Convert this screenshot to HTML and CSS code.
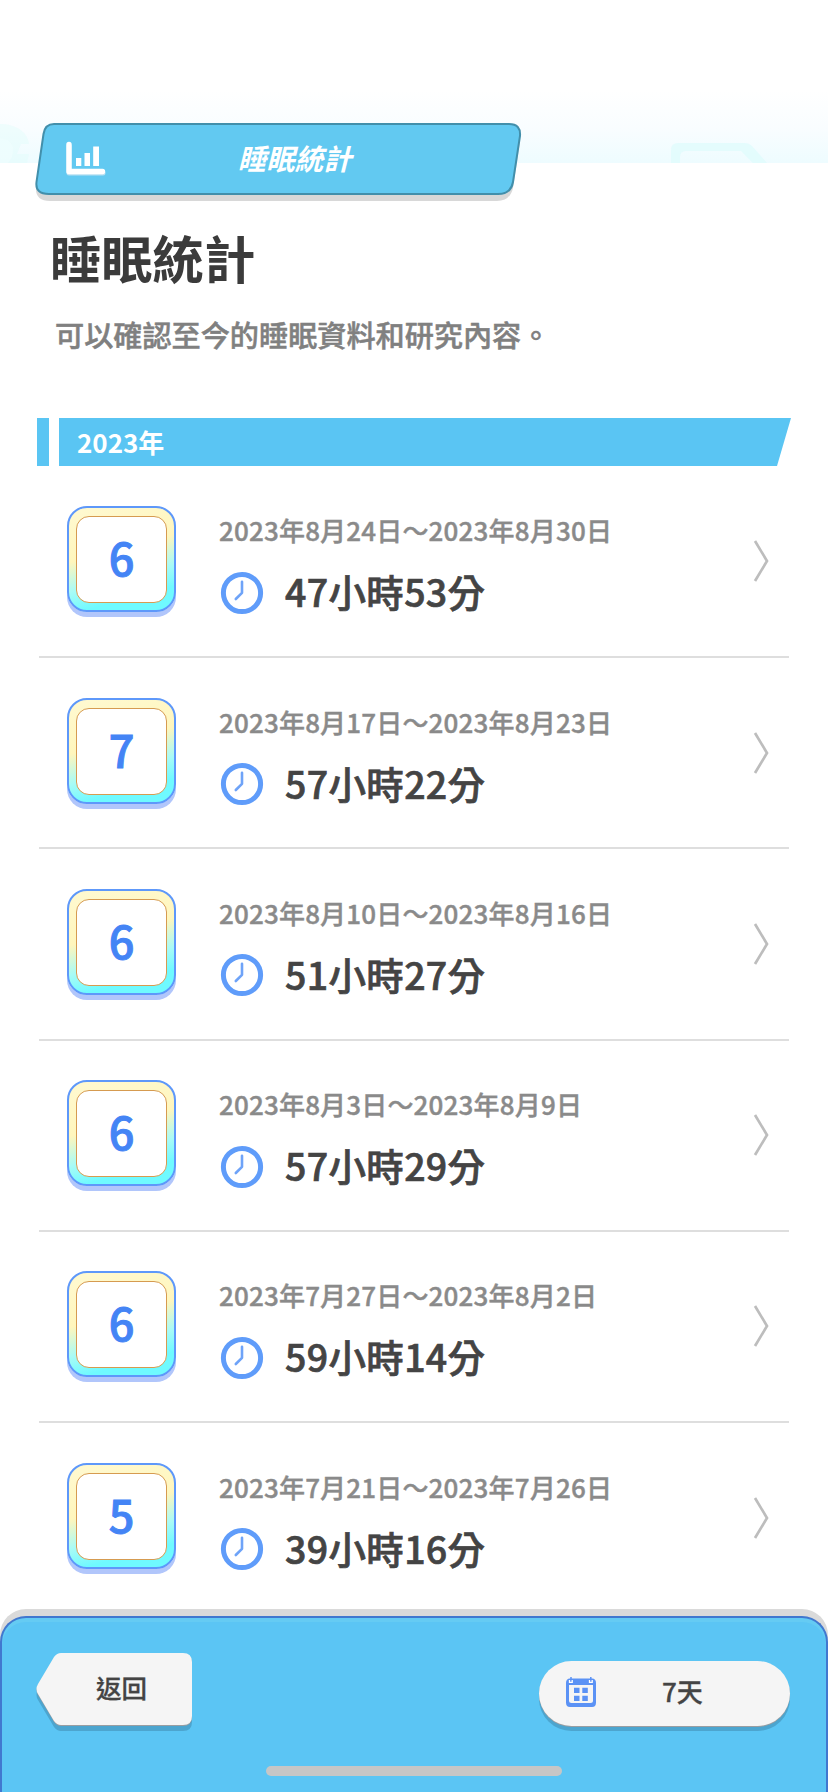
FILE: index.html
```html
<!DOCTYPE html>
<html lang="zh-Hant">
<head>
<meta charset="utf-8">
<title>睡眠統計</title>
<link rel="stylesheet" href="styles.css">
</head>
<body>
<svg class="symbols" width="0" height="0" aria-hidden="true">
  <symbol id="clock" viewBox="0 0 44 44">
    <circle cx="22" cy="22" r="18.6" fill="none" stroke="#5f9cfa" stroke-width="5"/>
    <path d="M22 10.7V21.8L15.8 28" fill="none" stroke="#6ea3f8" stroke-width="2.6" stroke-linecap="round" stroke-linejoin="round"/>
  </symbol>
  <symbol id="chevron" viewBox="0 0 16 44">
    <path d="M2 2L14 22L2 42" fill="none" stroke="#bdbdbd" stroke-width="2.7"/>
  </symbol>
</svg>
<div class="screen">
  <header class="top">
    <svg class="pattern" viewBox="0 0 828 73" aria-hidden="true">
      <path d="M0 34C16 34 28 42 29 54H21L17 64H29L27 73H0Z" fill="#dffcfb" opacity=".4"/>
      <path d="M0 48Q14 50 13 61Q13 68 8 73H0Z" fill="#effdfe" opacity=".7"/>
      <path d="M671 73V60Q671 53 678 53H745Q749 53 752 56L767 73H753L741 61H686Q680 61 680 67V73Z" fill="#e0fbfc" opacity=".8"/>
    </svg>
    <div class="tab">
      <svg class="tab-shape" viewBox="0 0 488 80" aria-hidden="true">
        <path d="M19 8H474Q486 8 485 20L478 66Q475 79 462 79H15Q0 79 1 65L9 18Q11 8 19 8Z" fill="#d8d8d8"/>
        <path d="M19 2H474Q486 2 485 14L478 60Q476 72 463 72H14Q0 72 1.500 60L8.500 12Q10 2 19 2Z" fill="#62c9f1" stroke="#428fab" stroke-width="2"/>
      </svg>
      <svg class="tab-icon" viewBox="0 0 40 36" aria-hidden="true">
        <path d="M3 4V31H37" transform="translate(0 1)" fill="none" stroke="#b9e0f2" stroke-width="5" stroke-linecap="round" stroke-linejoin="round"/>
        <path d="M3 3.500V30.500H36.500" fill="none" stroke="#fff" stroke-width="5.400" stroke-linecap="round" stroke-linejoin="round"/>
        <path d="M10 17H15.300V25H10ZM18.500 12H24V25H18.500ZM27.200 5.500H33V25H27.200Z" fill="#fff"/>
      </svg>
      <span class="tab-label">睡眠統計</span>
    </div>
  </header>
  <h1 class="title">睡眠統計</h1>
  <p class="lead">可以確認至今的睡眠資料和研究內容。</p>
  <div class="year"><i class="year-mark"></i><h2 class="year-bar">2023年</h2></div>
  <main class="list">
    <article class="row"><div class="badge"><b>6</b></div><div class="info"><p class="dates">2023年8月24日～2023年8月30日</p><p class="time"><svg class="clock"><use href="#clock"/></svg>47小時53分</p></div><svg class="chevron"><use href="#chevron"/></svg></article>
    <article class="row"><div class="badge"><b>7</b></div><div class="info"><p class="dates">2023年8月17日～2023年8月23日</p><p class="time"><svg class="clock"><use href="#clock"/></svg>57小時22分</p></div><svg class="chevron"><use href="#chevron"/></svg></article>
    <article class="row"><div class="badge"><b>6</b></div><div class="info"><p class="dates">2023年8月10日～2023年8月16日</p><p class="time"><svg class="clock"><use href="#clock"/></svg>51小時27分</p></div><svg class="chevron"><use href="#chevron"/></svg></article>
    <article class="row"><div class="badge"><b>6</b></div><div class="info"><p class="dates">2023年8月3日～2023年8月9日</p><p class="time"><svg class="clock"><use href="#clock"/></svg>57小時29分</p></div><svg class="chevron"><use href="#chevron"/></svg></article>
    <article class="row"><div class="badge"><b>6</b></div><div class="info"><p class="dates">2023年7月27日～2023年8月2日</p><p class="time"><svg class="clock"><use href="#clock"/></svg>59小時14分</p></div><svg class="chevron"><use href="#chevron"/></svg></article>
    <article class="row"><div class="badge"><b>5</b></div><div class="info"><p class="dates">2023年7月21日～2023年7月26日</p><p class="time"><svg class="clock"><use href="#clock"/></svg>39小時16分</p></div><svg class="chevron"><use href="#chevron"/></svg></article>
  </main>
  <footer class="dock">
    <div class="dock-panel">
      <div class="actions">
        <div class="back">
          <svg class="back-shape" viewBox="0 0 156 78" aria-hidden="true">
            <path d="M25 5H147Q156 5 156 14V69Q156 78 147 78H25Q21 78 18 74L2 47Q-1 42 2 37L18 9Q21 5 25 5Z" fill="#4ca5cf"/>
            <path d="M25 1H147Q156 1 156 10V64Q156 73 147 73H25Q21 73 18 69L2 42Q-1 37 2 32L18 5Q21 1 25 1Z" fill="#999ea2"/>
            <path d="M25 0H147Q156 0 156 9V63Q156 72 147 72H25Q21 72 18 68L2 41Q-1 36 2 31L18 4Q21 0 25 0Z" fill="#f5f5f5"/>
          </svg>
          <span class="back-label">返回</span>
        </div>
        <div class="range">
          <svg class="calendar" viewBox="0 0 30 30" aria-hidden="true">
            <path d="M4 1.500H26Q30 1.500 30 6V25.500Q30 30 26 30H4Q0 30 0 25.500V6Q0 1.500 4 1.500Z" fill="#5b92f5"/>
            <path d="M3 8H27V23.500Q27 26 24.500 26H5.500Q3 26 3 23.500Z" fill="#f5f5f5"/>
            <path d="M8 10.700H13.500V16H8ZM16.300 10.700H21.800V16H16.300ZM8 18.700H13.500V24H8ZM16.300 18.700H21.800V24H16.300Z" fill="#5b92f5"/>
            <path d="M3.500 3V5.300H6.200V3M23.500 3V5.300H26.200V3" fill="none" stroke="#fff" stroke-width="1.300"/>
            <path d="M5 0V3M24.800 0V3" stroke="#5b92f5" stroke-width="1.500"/>
          </svg>
          <span class="range-label">7天</span>
        </div>
      </div>
      <div class="home"></div>
    </div>
  </footer>
</div>
</body>
</html>
```
FILE: styles.css
```css
* { box-sizing: border-box; margin: 0; padding: 0; }
body {
  background: #fff;
  font-family: "Noto Sans CJK TC", sans-serif;
  color: #444;
}
.symbols { position: absolute; }
.screen {
  display: flex;
  flex-direction: column;
  width: 828px;
  height: 1792px;
  overflow: hidden;
}
.top {
  position: relative;
  flex: none;
  height: 208px;
  padding: 122px 0 0 35px;
  background: linear-gradient(#fff 90px, #f9fdff 128px, #eefcff 163px, #fff 163px);
}
.pattern { position: absolute; left: 0; top: 90px; width: 828px; height: 73px; }
.tab {
  position: relative;
  display: flex;
  width: 488px;
  height: 80px;
  padding: 19px 0 0 31px;
}
.tab-shape { position: absolute; inset: 0; width: 488px; height: 80px; }
.tab-icon { position: relative; width: 40px; height: 36px; }
.tab-label {
  position: relative;
  margin: -5px 0 0 135px;
  height: 42px;
  line-height: 42px;
  font-size: 29px;
  font-weight: 700;
  color: #fff;
  transform: scaleX(.98) skewX(-14deg);
  transform-origin: 0 50%;
}
.title {
  flex: none;
  height: 96px;
  padding-left: 50px;
  line-height: 97px;
  font-size: 51.300px;
  font-weight: 700;
  color: #3b3b3b;
}
.lead {
  flex: none;
  height: 114px;
  padding-left: 55px;
  line-height: 60px;
  font-size: 29.150px;
  font-weight: 500;
  -webkit-text-stroke: .5px #808080;
  color: #808080;
}
.year { flex: none; display: flex; gap: 10px; height: 48px; padding-left: 37px; }
.year-mark { width: 12px; background: #5ac5f3; }
.year-bar {
  width: 732px;
  padding-left: 18px;
  background: #5ac5f3;
  clip-path: polygon(0 0, 100% 0, calc(100% - 14px) 100%, 0 100%);
  line-height: 48px;
  font-size: 26px;
  font-weight: 700;
  color: #fff;
}
.list { flex: 1; min-height: 0; overflow: hidden; padding: 0 39px; }
.row {
  display: flex;
  height: 191.25px;
  padding: 39.500px 20px 0 28px;
  border-bottom: 2px solid #dedede;
}
.row:first-child { height: 192px; padding-top: 40px; }
.badge {
  display: flex;
  width: 109px;
  height: 106px;
  padding: 8px 7px 7px;
  border: 2px solid #5e98fa;
  border-radius: 20px;
  background: linear-gradient(165deg, #fff9cf 5%, #fff6bd 42%, #a8fbf6 65%, #6ffaff 82%);
  box-shadow: 0 5px 0 #b1c6fb;
}
.badge b {
  flex: 1;
  border: 1.500px solid #d69b50;
  border-radius: 13px;
  background: #fff;
  line-height: 79px;
  text-align: center;
  font-size: 45px;
  font-weight: 500;
  -webkit-text-stroke: 1px #4484f5;
  color: #4484f5;
}
.info { flex: 1; padding-left: 43px; }
.dates {
  height: 66px;
  line-height: 48px;
  white-space: nowrap;
  font-size: 26px;
  font-weight: 500;
  letter-spacing: .17px;
  -webkit-text-stroke: .4px #8a8a8a;
  color: #8a8a8a;
}
.time {
  display: flex;
  align-items: center;
  height: 38px;
  line-height: 36px;
  white-space: nowrap;
  font-size: 37.500px;
  font-weight: 500;
  letter-spacing: .35px;
  -webkit-text-stroke: .7px #444;
  color: #444;
}
.clock { width: 44px; height: 44px; margin: 3px 21px 0 1px; }
.chevron { width: 16px; height: 44px; margin-top: 33px; }
.dock {
  flex: none;
  height: 183px;
  padding-top: 7px;
  background: #dadada;
  border-radius: 26px 26px 0 0;
}
.dock-panel {
  height: 176px;
  padding: 35px 36px 0 34px;
  border: 2px solid #4178cf;
  border-bottom: 0;
  border-radius: 26px 26px 0 0;
  background: #5bc5f4;
  box-shadow: inset 0 4px 0 #65cbf3;
}
.actions { display: flex; justify-content: space-between; height: 113px; }
.back { position: relative; width: 156px; height: 78px; padding: 10px 0 0 60px; }
.back-shape { position: absolute; inset: 0; width: 156px; height: 78px; }
.back-label {
  position: relative;
  line-height: 48px;
  font-size: 25.500px;
  font-weight: 500;
  -webkit-text-stroke: .3px #444;
  white-space: nowrap;
}
.range {
  display: flex;
  align-items: center;
  width: 251px;
  height: 65px;
  margin-top: 8px;
  padding-left: 27px;
  border-radius: 33px;
  background: #f5f5f5;
  box-shadow: 0 1px 0 #999ea2, 0 5px 0 #4ca5cf;
}
.calendar { width: 30px; height: 30px; margin-top: -3px; }
.range-label { margin: -7px 0 0 66px; font-size: 26px; font-weight: 500; -webkit-text-stroke: .3px #444; }
.home { width: 296px; height: 10px; margin-left: 230px; border-radius: 5px; background: #c6c6c6; }
```
